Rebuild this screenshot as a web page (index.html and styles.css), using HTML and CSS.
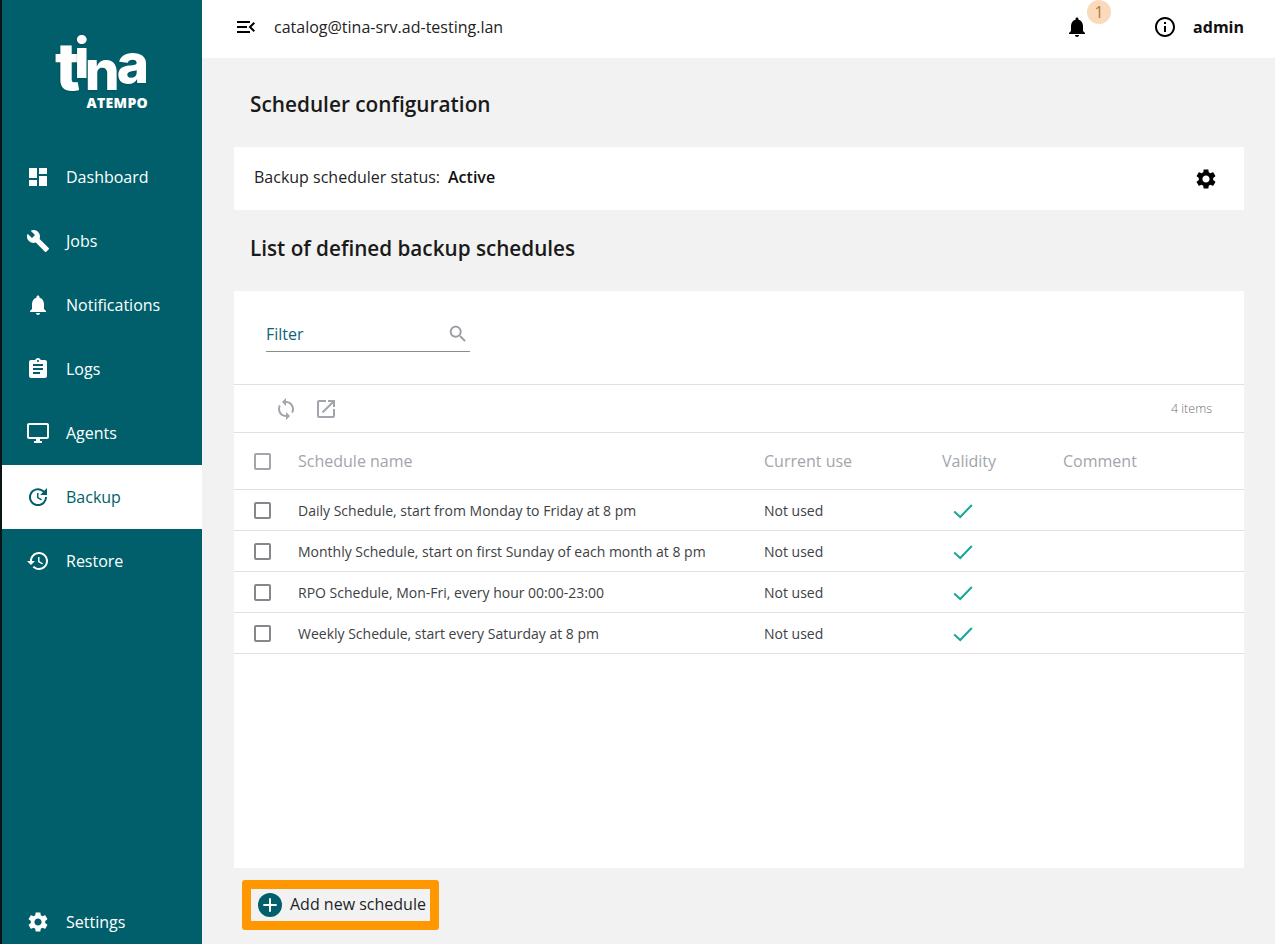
FILE: index.html
```html
<!DOCTYPE html>
<html lang="en">
<head>
    <meta charset="UTF-8">
    <meta name="viewport" content="width=device-width, initial-scale=1.0">
    <title>Scheduler configuration</title>
    <link rel="stylesheet" href="styles.css">
</head>
<body>
<div class="app">
    <!-- left menu -->
    <aside class="sidebar">
        <div class="logo">
            <div class="logo-name"><span class="lt">t</span><span class="li">i</span><span class="ln">n</span><span class="la">a</span></div>
            <div class="logo-sub">ATEMPO</div>
        </div>
        <nav class="menu">
            <a class="menu-item"><svg class="menu-icon" viewBox="0 0 24 24"><path d="M3 13h8V3H3v10zm0 8h8v-6H3v6zm10 0h8V11h-8v10zm0-18v6h8V3h-8z"/></svg>Dashboard</a>
            <a class="menu-item"><svg class="menu-icon" viewBox="0 0 24 24"><path d="M22.7 19l-9.1-9.1c.9-2.3.4-5-1.5-6.9-2-2-5-2.4-7.4-1.3L9 6 6 9 1.6 4.7C.4 7.1.9 10.1 2.9 12.1c1.9 1.9 4.6 2.4 6.9 1.5l9.1 9.1c.4.4 1 .4 1.4 0l2.3-2.3c.5-.4.5-1.1.1-1.4z"/></svg>Jobs</a>
            <a class="menu-item"><svg class="menu-icon" viewBox="0 0 24 24"><path d="M12 22c1.1 0 2-.9 2-2h-4c0 1.1.89 2 2 2zm6-6v-5c0-3.07-1.64-5.64-4.5-6.32V4c0-.83-.67-1.5-1.5-1.5s-1.5.67-1.5 1.5v.68C7.63 5.36 6 7.92 6 11v5l-2 2v1h16v-1l-2-2z"/></svg>Notifications</a>
            <a class="menu-item"><svg class="menu-icon" viewBox="0 0 24 24"><path d="M19 3h-4.18C14.4 1.84 13.3 1 12 1c-1.3 0-2.4.84-2.82 2H5c-1.1 0-2 .9-2 2v14c0 1.1.9 2 2 2h14c1.1 0 2-.9 2-2V5c0-1.1-.9-2-2-2zm-7 0c.55 0 1 .45 1 1s-.45 1-1 1-1-.45-1-1 .45-1 1-1zm2 14H7v-2h7v2zm3-4H7v-2h10v2zm0-4H7V7h10v2z"/></svg>Logs</a>
            <a class="menu-item"><svg class="menu-icon" viewBox="0 0 24 24"><path d="M21 2H3c-1.1 0-2 .9-2 2v12c0 1.1.9 2 2 2h7v2H8v2h8v-2h-2v-2h7c1.1 0 2-.9 2-2V4c0-1.1-.9-2-2-2zm0 14H3V4h18v12z"/></svg>Agents</a>
            <a class="menu-item active"><svg class="menu-icon" viewBox="0 0 24 24"><path d="M21 10.12h-6.78l2.74-2.82c-2.73-2.7-7.15-2.8-9.88-.1-2.73 2.71-2.73 7.08 0 9.79s7.15 2.71 9.88 0C18.32 15.65 19 14.08 19 12.1h2c0 1.98-.88 4.55-2.64 6.29-3.51 3.48-9.21 3.48-12.72 0-3.5-3.47-3.53-9.11-.02-12.58s9.14-3.47 12.65 0L21 3v7.12zM12.5 8v4.25l3.5 2.08-.72 1.21L11 13V8h1.5z"/></svg>Backup</a>
            <a class="menu-item"><svg class="menu-icon" viewBox="0 0 24 24"><path d="M13 3c-4.97 0-9 4.03-9 9H1l3.89 3.89.07.14L9 12H6c0-3.87 3.13-7 7-7s7 3.13 7 7-3.13 7-7 7c-1.93 0-3.68-.79-4.94-2.06l-1.42 1.42C8.27 19.99 10.51 21 13 21c4.97 0 9-4.03 9-9s-4.03-9-9-9zm-1 5v5l4.28 2.54.72-1.21-3.5-2.08V8H12z"/></svg>Restore</a>
        </nav>
        <a class="menu-item settings"><svg class="menu-icon" viewBox="0 0 24 24"><path d="M19.14 12.94c.04-.3.06-.61.06-.94 0-.32-.02-.64-.07-.94l2.03-1.58c.18-.14.23-.41.12-.61l-1.92-3.32c-.12-.22-.37-.29-.59-.22l-2.39.96c-.5-.38-1.03-.7-1.62-.94l-.36-2.54c-.04-.24-.24-.41-.48-.41h-3.84c-.24 0-.43.17-.47.41l-.36 2.54c-.59.24-1.13.57-1.62.94l-2.39-.96c-.22-.08-.47 0-.59.22L2.74 8.87c-.12.21-.08.47.12.61l2.03 1.58c-.05.3-.09.63-.09.94s.02.64.07.94l-2.03 1.58c-.18.14-.23.41-.12.61l1.92 3.32c.12.22.37.29.59.22l2.39-.96c.5.38 1.03.7 1.62.94l.36 2.54c.05.24.24.41.48.41h3.84c.24 0 .44-.17.47-.41l.36-2.54c.59-.24 1.13-.56 1.62-.94l2.39.96c.22.08.47 0 .59-.22l1.92-3.32c.12-.22.07-.47-.12-.61l-2.01-1.58zM12 15.6c-1.98 0-3.6-1.62-3.6-3.6s1.62-3.6 3.6-3.6 3.6 1.62 3.6 3.6-1.62 3.6-3.6 3.6z"/></svg>Settings</a>
    </aside>

    <div class="main">
        <!-- top bar -->
        <header class="topbar">
            <svg class="collapse-icon" viewBox="0 0 24 24"><path d="M3 18h13v-2H3v2zm0-5h10v-2H3v2zm0-7v2h13V6H3zm18 9.59L17.42 12 21 8.41 19.59 7l-5 5 5 5L21 15.59z"/></svg>
            <span class="catalog">catalog@tina-srv.ad-testing.lan</span>
            <div class="bell">
                <svg class="bell-icon" viewBox="0 0 24 24"><path d="M12 22c1.1 0 2-.9 2-2h-4c0 1.1.89 2 2 2zm6-6v-5c0-3.07-1.64-5.64-4.5-6.32V4c0-.83-.67-1.5-1.5-1.5s-1.5.67-1.5 1.5v.68C7.63 5.36 6 7.92 6 11v5l-2 2v1h16v-1l-2-2z"/></svg>
                <span class="badge">1</span>
            </div>
            <svg class="info-icon" viewBox="0 0 24 24"><path d="M11 7h2v2h-2zm0 4h2v6h-2zm1-9C6.48 2 2 6.48 2 12s4.48 10 10 10 10-4.48 10-10S17.52 2 12 2zm0 18c-4.41 0-8-3.59-8-8s3.59-8 8-8 8 3.59 8 8-3.59 8-8 8z"/></svg>
            <span class="user">admin</span>
        </header>

        <main class="content">
            <h1 class="title">Scheduler configuration</h1>
            <section class="status-card">
                <span class="status-label">Backup scheduler status:</span>
                <strong class="status-value">Active</strong>
                <svg class="gear-icon" viewBox="0 0 24 24"><path d="M19.14 12.94c.04-.3.06-.61.06-.94 0-.32-.02-.64-.07-.94l2.03-1.58c.18-.14.23-.41.12-.61l-1.92-3.32c-.12-.22-.37-.29-.59-.22l-2.39.96c-.5-.38-1.03-.7-1.62-.94l-.36-2.54c-.04-.24-.24-.41-.48-.41h-3.84c-.24 0-.43.17-.47.41l-.36 2.54c-.59.24-1.13.57-1.62.94l-2.39-.96c-.22-.08-.47 0-.59.22L2.74 8.87c-.12.21-.08.47.12.61l2.03 1.58c-.05.3-.09.63-.09.94s.02.64.07.94l-2.03 1.58c-.18.14-.23.41-.12.61l1.92 3.32c.12.22.37.29.59.22l2.39-.96c.5.38 1.03.7 1.62.94l.36 2.54c.05.24.24.41.48.41h3.84c.24 0 .44-.17.47-.41l.36-2.54c.59-.24 1.13-.56 1.62-.94l2.39.96c.22.08.47 0 .59-.22l1.92-3.32c.12-.22.07-.47-.12-.61l-2.01-1.58zM12 15.6c-1.98 0-3.6-1.62-3.6-3.6s1.62-3.6 3.6-3.6 3.6 1.62 3.6 3.6-1.62 3.6-3.6 3.6z"/></svg>
            </section>

            <h2 class="subtitle">List of defined backup schedules</h2>

            <section class="list-card">
                <div class="filter-row">
                    <div class="filter">
                        <span class="filter-label">Filter</span>
                        <svg class="search-icon" viewBox="0 0 24 24"><path d="M15.5 14h-.79l-.28-.27C15.41 12.59 16 11.11 16 9.5 16 5.91 13.09 3 9.5 3S3 5.91 3 9.5 5.91 16 9.5 16c1.61 0 3.09-.59 4.23-1.57l.27.28v.79l5 4.99L20.49 19l-4.99-5zm-6 0C7.01 14 5 11.99 5 9.5S7.01 5 9.5 5 14 7.01 14 9.5 11.99 14 9.5 14z"/></svg>
                    </div>
                </div>
                <div class="toolbar">
                    <svg class="tool-icon" viewBox="0 0 24 24"><path d="M12 4V1L8 5l4 4V6c3.31 0 6 2.69 6 6 0 1.01-.25 1.97-.7 2.8l1.46 1.46C19.54 15.03 20 13.57 20 12c0-4.42-3.58-8-8-8zm0 14c-3.31 0-6-2.69-6-6 0-1.01.25-1.97.7-2.8L5.24 7.74C4.46 8.97 4 10.43 4 12c0 4.42 3.58 8 8 8v3l4-4-4-4v3z"/></svg>
                    <svg class="tool-icon" viewBox="0 0 24 24"><path d="M19 19H5V5h7V3H5a2 2 0 0 0-2 2v14a2 2 0 0 0 2 2h14c1.1 0 2-.9 2-2v-7h-2v7zM14 3v2h3.59l-9.83 9.83 1.41 1.41L19 6.41V10h2V3h-7z"/></svg>
                    <span class="count">4 items</span>
                </div>
                <table class="schedules">
                    <thead>
                        <tr>
                            <th class="col-check"><span class="checkbox"></span></th>
                            <th class="col-name">Schedule name</th>
                            <th class="col-use">Current use</th>
                            <th class="col-valid">Validity</th>
                            <th>Comment</th>
                        </tr>
                    </thead>
                    <tbody>
                        <tr>
                            <td class="col-check"><span class="checkbox"></span></td>
                            <td>Daily Schedule, start from Monday to Friday at 8 pm</td>
                            <td>Not used</td>
                            <td class="cell-valid"><svg class="check-icon" viewBox="0 0 20 20"><path d="M2 10.5l5.5 5L18 4.500"/></svg></td>
                            <td></td>
                        </tr>
                        <tr>
                            <td class="col-check"><span class="checkbox"></span></td>
                            <td>Monthly Schedule, start on first Sunday of each month at 8 pm</td>
                            <td>Not used</td>
                            <td class="cell-valid"><svg class="check-icon" viewBox="0 0 20 20"><path d="M2 10.5l5.5 5L18 4.500"/></svg></td>
                            <td></td>
                        </tr>
                        <tr>
                            <td class="col-check"><span class="checkbox"></span></td>
                            <td>RPO Schedule, Mon-Fri, every hour 00:00-23:00</td>
                            <td>Not used</td>
                            <td class="cell-valid"><svg class="check-icon" viewBox="0 0 20 20"><path d="M2 10.5l5.5 5L18 4.500"/></svg></td>
                            <td></td>
                        </tr>
                        <tr>
                            <td class="col-check"><span class="checkbox"></span></td>
                            <td>Weekly Schedule, start every Saturday at 8 pm</td>
                            <td>Not used</td>
                            <td class="cell-valid"><svg class="check-icon" viewBox="0 0 20 20"><path d="M2 10.5l5.5 5L18 4.500"/></svg></td>
                            <td></td>
                        </tr>
                    </tbody>
                </table>
            </section>

            <div class="add-row">
                <button class="add-btn">
                    <span class="add-circle"><svg class="plus-icon" viewBox="0 0 24 24"><path d="M12 4v16M4 12h16"/></svg></span>
                    Add new schedule
                </button>
            </div>
        </main>
    </div>
</div>
</body>
</html>
```

FILE: styles.css
```css
*{
    margin:0;
    padding:0;
    box-sizing:border-box;
}
html,body{
    height:944px;
    overflow:hidden;
}
body{
    font-family:"Open Sans","Liberation Sans",sans-serif;
    color:#1f2326;
    background:#f2f2f2;
}
.app{
    display:flex;
    height:944px;
    border-left:2px solid #0b1416;
}

/* sidebar */
.sidebar{
    width:200px;
    flex:none;
    background:#005f6b;
    display:flex;
    flex-direction:column;
    color:#fff;
    overflow:hidden;
}
.logo{
    height:145px;
    padding-top:28px;
    display:flex;
    flex-direction:column;
    align-items:flex-end;
    width:146px;
}
.logo-name{
    font-family:Inter,"Open Sans",sans-serif;
    font-weight:800;
    font-size:55px;
    line-height:60px;
    height:69px;
    white-space:nowrap;
    color:#fff;
    text-shadow:-1px 1px 2px rgba(0,0,0,.15);
}
.lt{
    font-size:66px;
    line-height:60px;
    letter-spacing:-6px;
}
.li{
    vertical-align:12px;
    letter-spacing:-5px;
}
.ln{
    letter-spacing:-3px;
}
.la{
    vertical-align:7px;
    letter-spacing:-1px;
}
.logo-sub{
    font-weight:800;
    font-size:14px;
    line-height:12px;
    letter-spacing:.3px;
}
.menu{
    display:flex;
    flex-direction:column;
}
.menu-item{
    height:64px;
    display:flex;
    align-items:center;
    font-size:16px;
    color:#fff;
}
.menu-icon{
    width:24px;
    height:24px;
    margin-left:24px;
    margin-right:16px;
    fill:currentColor;
    flex:none;
}
.menu-item.active{
    background:#fff;
    color:#005f6b;
}
.settings{
    margin-top:auto;
    margin-bottom:-10px;
}

/* top bar */
.main{
    flex:1;
    min-width:0;
    display:flex;
    flex-direction:column;
}
.topbar{
    height:58px;
    flex:none;
    background:#fff;
    display:flex;
    align-items:center;
    padding-left:32px;
    padding-right:31px;
    padding-bottom:4px;
}
.collapse-icon{
    width:24px;
    height:24px;
    fill:#000;
    margin-right:16px;
}
.catalog{
    font-size:16px;
    color:#1f2326;
}
.bell{
    margin-left:auto;
    position:relative;
    width:24px;
    height:24px;
    margin-right:64px;
}
.bell-icon{
    width:24px;
    height:24px;
    fill:#000;
}
.badge{
    position:absolute;
    left:22px;
    top:-15px;
    width:24px;
    height:24px;
    border-radius:50%;
    background:#fbd9bb;
    color:#b5793f;
    font-size:16px;
    line-height:24px;
    text-align:center;
}
.info-icon{
    width:24px;
    height:24px;
    fill:#000;
    margin-right:16px;
}
.user{
    font-size:16px;
    font-weight:700;
    color:#111;
}

/* content */
.content{
    flex:1;
    min-height:0;
    padding:0 31px 0 32px;
    display:flex;
    flex-direction:column;
}
.title{
    font-size:20.8px;
    font-weight:600;
    line-height:28px;
    margin-top:32px;
    margin-left:16px;
    color:#1a1a1a;
}
.status-card{
    height:63px;
    margin-top:29px;
    background:#fff;
    display:flex;
    align-items:center;
    padding:0 26px 0 20px;
    font-size:16px;
}
.status-label,
.status-value{
    margin-bottom:4px;
}
.status-value{
    margin-left:8px;
    font-weight:600;
    color:#111;
}
.gear-icon{
    width:24px;
    height:24px;
    margin-left:auto;
    fill:#000;
}
.subtitle{
    font-size:20.7px;
    font-weight:600;
    line-height:28px;
    margin-top:24px;
    margin-left:16px;
    color:#1a1a1a;
}
.list-card{
    height:577px;
    margin-top:29px;
    background:#fff;
    flex:none;
}
.filter-row{
    height:94px;
    padding:26px 0 0 32px;
    border-bottom:1px solid #e0e0e0;
}
.filter{
    width:204px;
    height:35px;
    border-bottom:1px solid #8c8c8c;
    display:flex;
    align-items:center;
    justify-content:space-between;
    padding-right:1px;
}
.filter-label{
    font-size:16px;
    color:#0f6375;
}
.search-icon{
    width:22px;
    height:22px;
    fill:#9a9ca3;
}
.toolbar{
    height:48px;
    border-bottom:1px solid #e0e0e0;
    display:flex;
    align-items:center;
    padding-left:40px;
    padding-right:32px;
    gap:16px;
}
.tool-icon{
    width:24px;
    height:24px;
    fill:#a3a5ac;
}
.count{
    margin-left:auto;
    font-size:12.5px;
    font-weight:300;
    color:#6f6f75;
}
.schedules{
    width:100%;
    border-collapse:collapse;
    table-layout:fixed;
}
.schedules th{
    height:56px;
    font-size:16px;
    font-weight:400;
    color:#a3a5ac;
    text-align:left;
    border-bottom:1px solid #e0e0e0;
}
.schedules td{
    height:41px;
    padding-top:2px;
    font-size:14px;
    color:#3d4145;
    border-bottom:1px solid #e0e0e0;
}
.schedules .col-check{
    width:64px;
    padding-left:20px;
    padding-top:2px;
}
.col-name{
    width:466px;
}
.col-use{
    width:178px;
}
.col-valid{
    width:121px;
}
.checkbox{
    display:block;
    width:17px;
    height:17px;
    border:2px solid #a3a5ac;
    border-radius:2px;
}
.schedules td .checkbox{
    border-color:#85878c;
}
.schedules .cell-valid{
    padding-left:10px;
}
.check-icon{
    display:block;
    width:22px;
    height:22px;
    fill:none;
    stroke:#17a79b;
    stroke-width:1.8;
}

/* add button */
.add-row{
    margin-top:12px;
    padding-left:8px;
}
.add-btn{
    display:flex;
    align-items:center;
    width:197px;
    height:50px;
    border:9px solid #ff9800;
    border-radius:3px;
    background:transparent;
    font-family:inherit;
    font-size:16px;
    color:#1f2326;
    padding-left:7px;
    padding-bottom:2px;
    white-space:nowrap;
}
.add-circle{
    width:24px;
    height:24px;
    border-radius:50%;
    background:#005f6b;
    display:flex;
    align-items:center;
    justify-content:center;
    margin-right:8px;
    margin-top:2px;
    flex:none;
}
.plus-icon{
    width:20px;
    height:20px;
    fill:none;
    stroke:#fff;
    stroke-width:2.4;
}
```
